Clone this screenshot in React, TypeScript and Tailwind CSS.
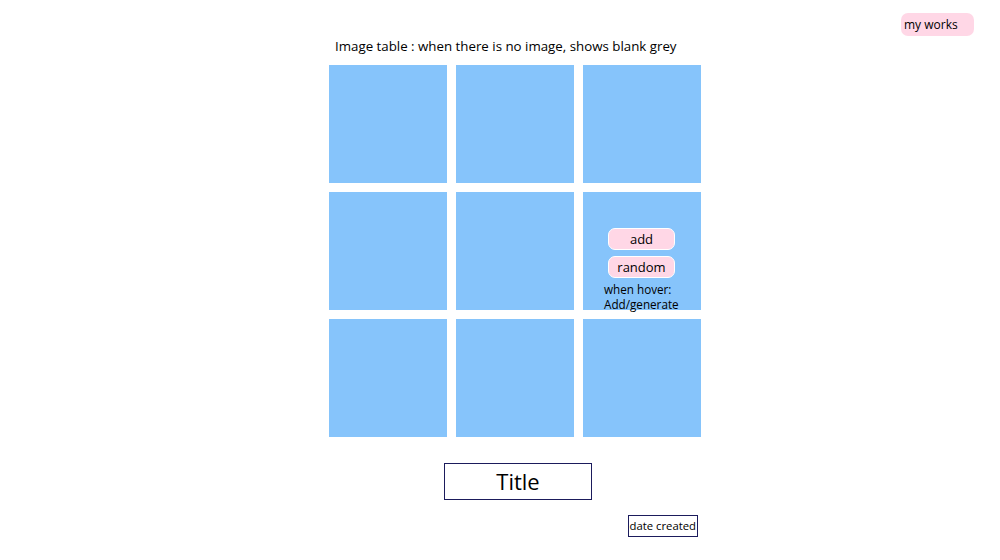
import React from "react";

const cells = Array.from({ length: 9 }, (_, i) => i);

export default function App() {
  return (
    <div
      className="relative w-[1000px] h-[560px] bg-white text-black overflow-hidden"
      style={{ fontFamily: '"Open Sans", "Noto Sans", sans-serif' }}
    >
      <button className="absolute left-[901px] top-[13px] w-[73px] h-[23px] rounded-[7px] bg-[#ffd7e6] text-left pl-[3px] text-[12px] leading-[23px]">
        my works
      </button>

      <div className="pl-[329px] pt-[35px] flex flex-col w-[701px]">
        <p className="pl-[6px] text-[13.3px] leading-[22px] h-[22px]">
          Image table : when there is no image, shows blank grey
        </p>

        <div className="mt-[8px] grid grid-cols-[118px_118px_118px] auto-rows-[118px] gap-[9px]">
          {cells.map((i) => (
            <div key={i} className="bg-[#86c4fb] relative">
              {i === 5 && (
                <div className="flex flex-col pl-[25px] pt-[36px]">
                  <button className="w-[67px] h-[22px] rounded-[7px] border border-white bg-[#ffd7e6] text-[13px] leading-[20px]">
                    add
                  </button>
                  <button className="mt-[6px] w-[67px] h-[22px] rounded-[7px] border border-white bg-[#ffd7e6] text-[13px] leading-[20px]">
                    random
                  </button>
                  <div className="mt-[4px] -ml-[4px] text-[11.7px] leading-[15px]">
                    <p>when hover:</p>
                    <p>Add/generate</p>
                  </div>
                </div>
              )}
            </div>
          ))}
        </div>

        <div className="mt-[26px] flex justify-center pl-[6px]">
          <div className="w-[148px] h-[37px] border border-[#1b1b5c] flex items-center justify-center text-[22px]">
            Title
          </div>
        </div>

        <div className="mt-[15px] flex justify-end pr-[3px]">
          <div className="h-[22px] px-[1px] border border-[#1b1b5c] text-[11.3px] leading-[20px]">
            date created
          </div>
        </div>
      </div>
    </div>
  );
}
